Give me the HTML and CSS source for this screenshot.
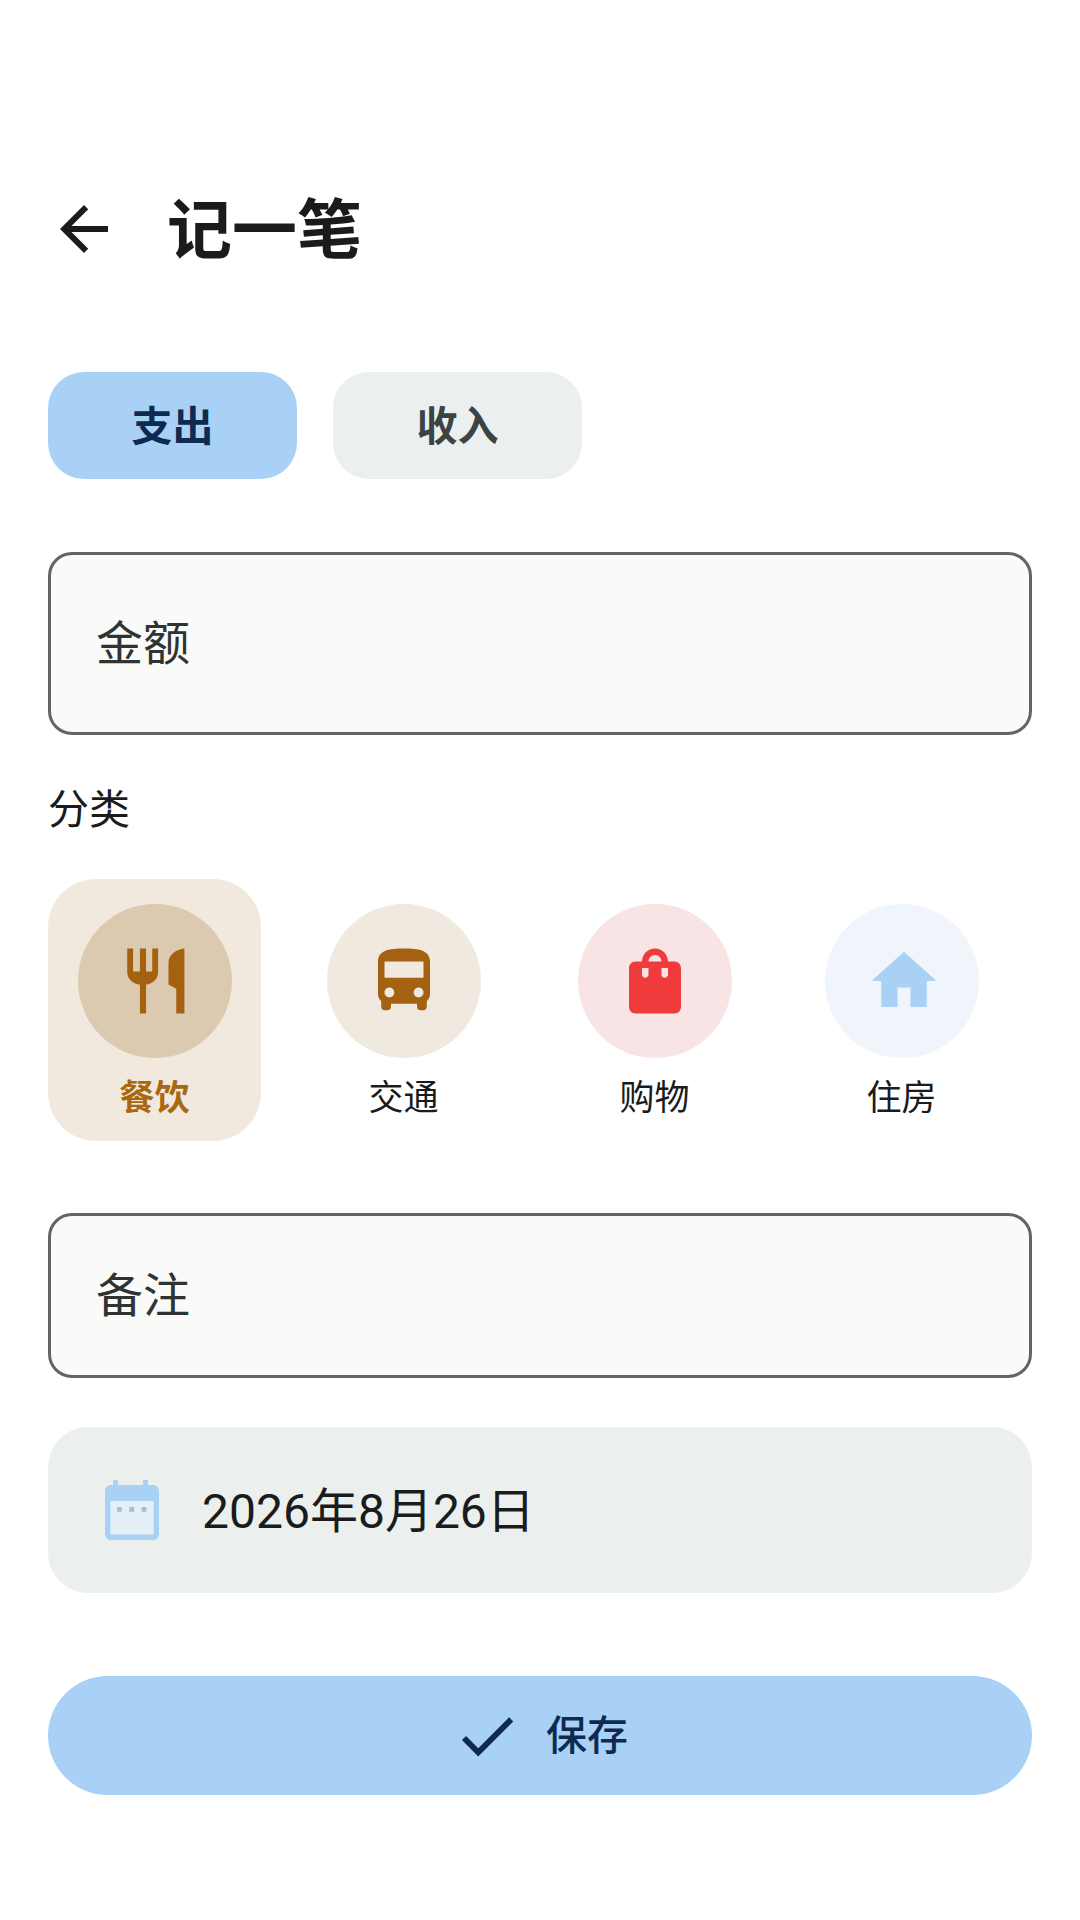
FILE: index.html
```html
<!DOCTYPE html>
<html lang="zh-CN">
<head>
<meta charset="utf-8">
<title>记一笔</title>
<link rel="stylesheet" href="styles.css">
</head>
<body>
<main class="page">
  <header class="header">
    <svg class="icon-back" viewBox="0 0 24 24"><path d="M20 11H7.83l5.59-5.59L12 4l-8 8 8 8 1.41-1.41L7.83 13H20v-2z"/></svg>
    <h1 class="title">记一笔</h1>
  </header>
  <div class="tabs">
    <div class="tab tab-active">支出</div>
    <div class="tab tab-idle">收入</div>
  </div>
  <div class="field field-amount">金额</div>
  <div class="section-label">分类</div>
  <div class="cats">
    <div class="cat cat-selected">
      <div class="circle circle-food">
        <svg class="icon icon-brown" viewBox="-0.45 0 24 24"><path d="M3 2h1.8v7.1h2.1V2h1.9v7.1h1.9V2h1.8v7.3c0 2-1.5 3.6-3.7 3.8V22H6.9v-8.9C4.6 12.9 3 11.3 3 9.3z"/><path d="M20.6 2v20h-2.5v-7.6l-2.4-1.3V6.4C15.7 4 18 2.2 20.6 2z"/></svg>
      </div>
      <div class="cat-label">餐饮</div>
    </div>
    <div class="cat">
      <div class="circle circle-bus">
        <svg class="icon icon-brown" viewBox="0 0 24 24"><path d="M4 16c0 .88.39 1.67 1 2.22V20c0 .55.45 1 1 1h1c.55 0 1-.45 1-1v-1h8v1c0 .55.45 1 1 1h1c.55 0 1-.45 1-1v-1.78c.61-.55 1-1.34 1-2.22V6c0-3.5-3.58-4-8-4s-8 .5-8 4v10zm3.5 1c-.83 0-1.5-.67-1.5-1.5S6.67 14 7.5 14s1.5.67 1.5 1.5S8.33 17 7.5 17zm9 0c-.83 0-1.5-.67-1.5-1.5s.67-1.5 1.5-1.5 1.5.67 1.5 1.5-.67 1.5-1.5 1.5zm1.5-6H6V6h12v5z"/></svg>
      </div>
      <div class="cat-label">交通</div>
    </div>
    <div class="cat cat-shop">
      <div class="circle circle-shop">
        <svg class="icon icon-red" viewBox="0 0 24 24"><path d="M18 6h-2c0-2.21-1.79-4-4-4S8 3.79 8 6H6c-1.1 0-2 .9-2 2v12c0 1.1.9 2 2 2h12c1.1 0 2-.9 2-2V8c0-1.1-.9-2-2-2zm-8 4c0 .55-.45 1-1 1s-1-.45-1-1V8h2v2zm2-6c1.1 0 2 .9 2 2h-4c0-1.1.9-2 2-2zm4 6c0 .55-.45 1-1 1s-1-.45-1-1V8h2v2z"/></svg>
      </div>
      <div class="cat-label">购物</div>
    </div>
    <div class="cat">
      <div class="circle circle-home">
        <svg class="icon icon-blue icon-house" viewBox="0 0 24 24"><path d="M10 20v-6h4v6h5v-8h3L12 3 2 12h3v8z"/></svg>
      </div>
      <div class="cat-label">住房</div>
    </div>
  </div>
  <div class="field field-note">备注</div>
  <div class="date-row">
    <svg class="icon-cal" viewBox="0 0 24 24">
      <rect class="cal-inner" x="4.5" y="8.5" width="15" height="12"/>
      <path class="cal-frame" fill-rule="evenodd" d="M19 3.7h-1.7V2h-1.6v1.7H7.3V2H5.7v1.7H5c-1.1 0-2 .9-2 2V20c0 1.1.9 2 2 2h14c1.1 0 2-.9 2-2V5.7c0-1.1-.9-2-2-2zM19.2 20.2H4.8V9h14.4z"/>
      <rect class="cal-dot" x="7" y="11" width="1.6" height="1.6"/>
      <rect class="cal-dot" x="11.1" y="11" width="1.6" height="1.6"/>
      <rect class="cal-dot" x="15.2" y="11" width="1.6" height="1.6"/>
    </svg>
    <span class="date-text">2026年8月26日</span>
  </div>
  <div class="save">
    <svg class="icon-check" viewBox="0 0 24 24"><path d="M9 16.17 4.83 12l-1.42 1.41L9 19 21 7l-1.41-1.41z"/></svg>
    <span class="save-text">保存</span>
  </div>
</main>
</body>
</html>
```
FILE: styles.css
```css
* { box-sizing: border-box; }
html, body { margin: 0; padding: 0; background: #ffffff; }
body {
  width: 1080px;
  height: 1920px;
  overflow: hidden;
  font-family: "Noto Sans CJK SC", "Noto Sans", sans-serif;
  color: #1a1c1c;
}
.page { padding: 193px 48px 0; }

.header { display: flex; align-items: center; height: 72px; gap: 47px; }
.icon-back { width: 72px; height: 72px; fill: #1a1c1c; flex: none; }
.title { margin: 0; padding-bottom: 8px; font-size: 65px; line-height: 72px; font-weight: 700; color: #1a1c1c; }

.tabs { display: flex; gap: 36px; margin-top: 107px; }
.tab {
  width: 249px; height: 107px; border-radius: 36px; padding-bottom: 5px;
  display: flex; align-items: center; justify-content: center;
  font-size: 41px; font-weight: 700;
}
.tab-active { background: #a8d1f5; color: #0f2a50; }
.tab-idle { background: #ebefee; color: #3c4443; }

.field {
  display: flex; align-items: center;
  padding-left: 45px; padding-bottom: 8px;
  background: #fafaf8;
  border: 3px solid #5f6664;
  border-radius: 24px;
  font-size: 47px;
  color: #2e3433;
}
.field-amount { height: 183px; margin-top: 73px; }
.field-note { height: 165px; margin-top: 72px; }

.section-label { margin-top: 47px; margin-bottom: 49px; font-size: 41px; line-height: 48px; }

.cats { display: flex; gap: 36px; }
.cat {
  width: 213px; height: 262px; padding-top: 25px; border-radius: 48px;
  display: flex; flex-direction: column; align-items: center;
}
.cat-shop { margin-left: 2px; margin-right: -2px; }
.cat-selected { background: #f1e9dd; }
.circle {
  width: 154px; height: 154px; border-radius: 50%;
  display: flex; align-items: center; justify-content: center; flex: none;
}
.circle-food { background: #dccab0; }
.circle-bus { background: #f0e9df; }
.circle-shop { background: #f8e3e5; }
.circle-home { background: #eff5fa; }
.icon { width: 78px; height: 78px; }
.icon-brown { fill: #a4610f; }
.icon-red { fill: #ef3b3b; }
.icon-blue { fill: #a8d1f5; }
.icon-house { margin-left: 4px; }
.cat-label { margin-top: 12px; font-size: 35px; line-height: 50px; color: #1a1c1c; }
.cat-selected .cat-label { color: #a8680f; font-weight: 700; }

.date-row {
  display: flex; align-items: center; gap: 38px;
  height: 166px; margin-top: 49px; padding-left: 52px;
  background: #ebefee; border-radius: 40px;
}
.icon-cal { width: 72px; height: 72px; margin: 0 -4px; flex: none; }
.cal-frame { fill: #a8d1f5; }
.cal-inner { fill: #e4eef5; }
.cal-dot { fill: #9cc3e0; }
.date-text { padding-bottom: 7px; font-family: "Roboto", "Noto Sans CJK SC", sans-serif; font-size: 48px; color: #1a1c1c; }

.save {
  display: flex; align-items: center; justify-content: center; gap: 24px;
  height: 119px; margin-top: 83px;
  background: #a8d1f5; border-radius: 60px;
}
.icon-check { width: 70px; height: 70px; fill: #0f2a50; }
.save-text { padding-bottom: 7px; font-size: 41px; font-weight: 500; color: #0f2a50; }
```
